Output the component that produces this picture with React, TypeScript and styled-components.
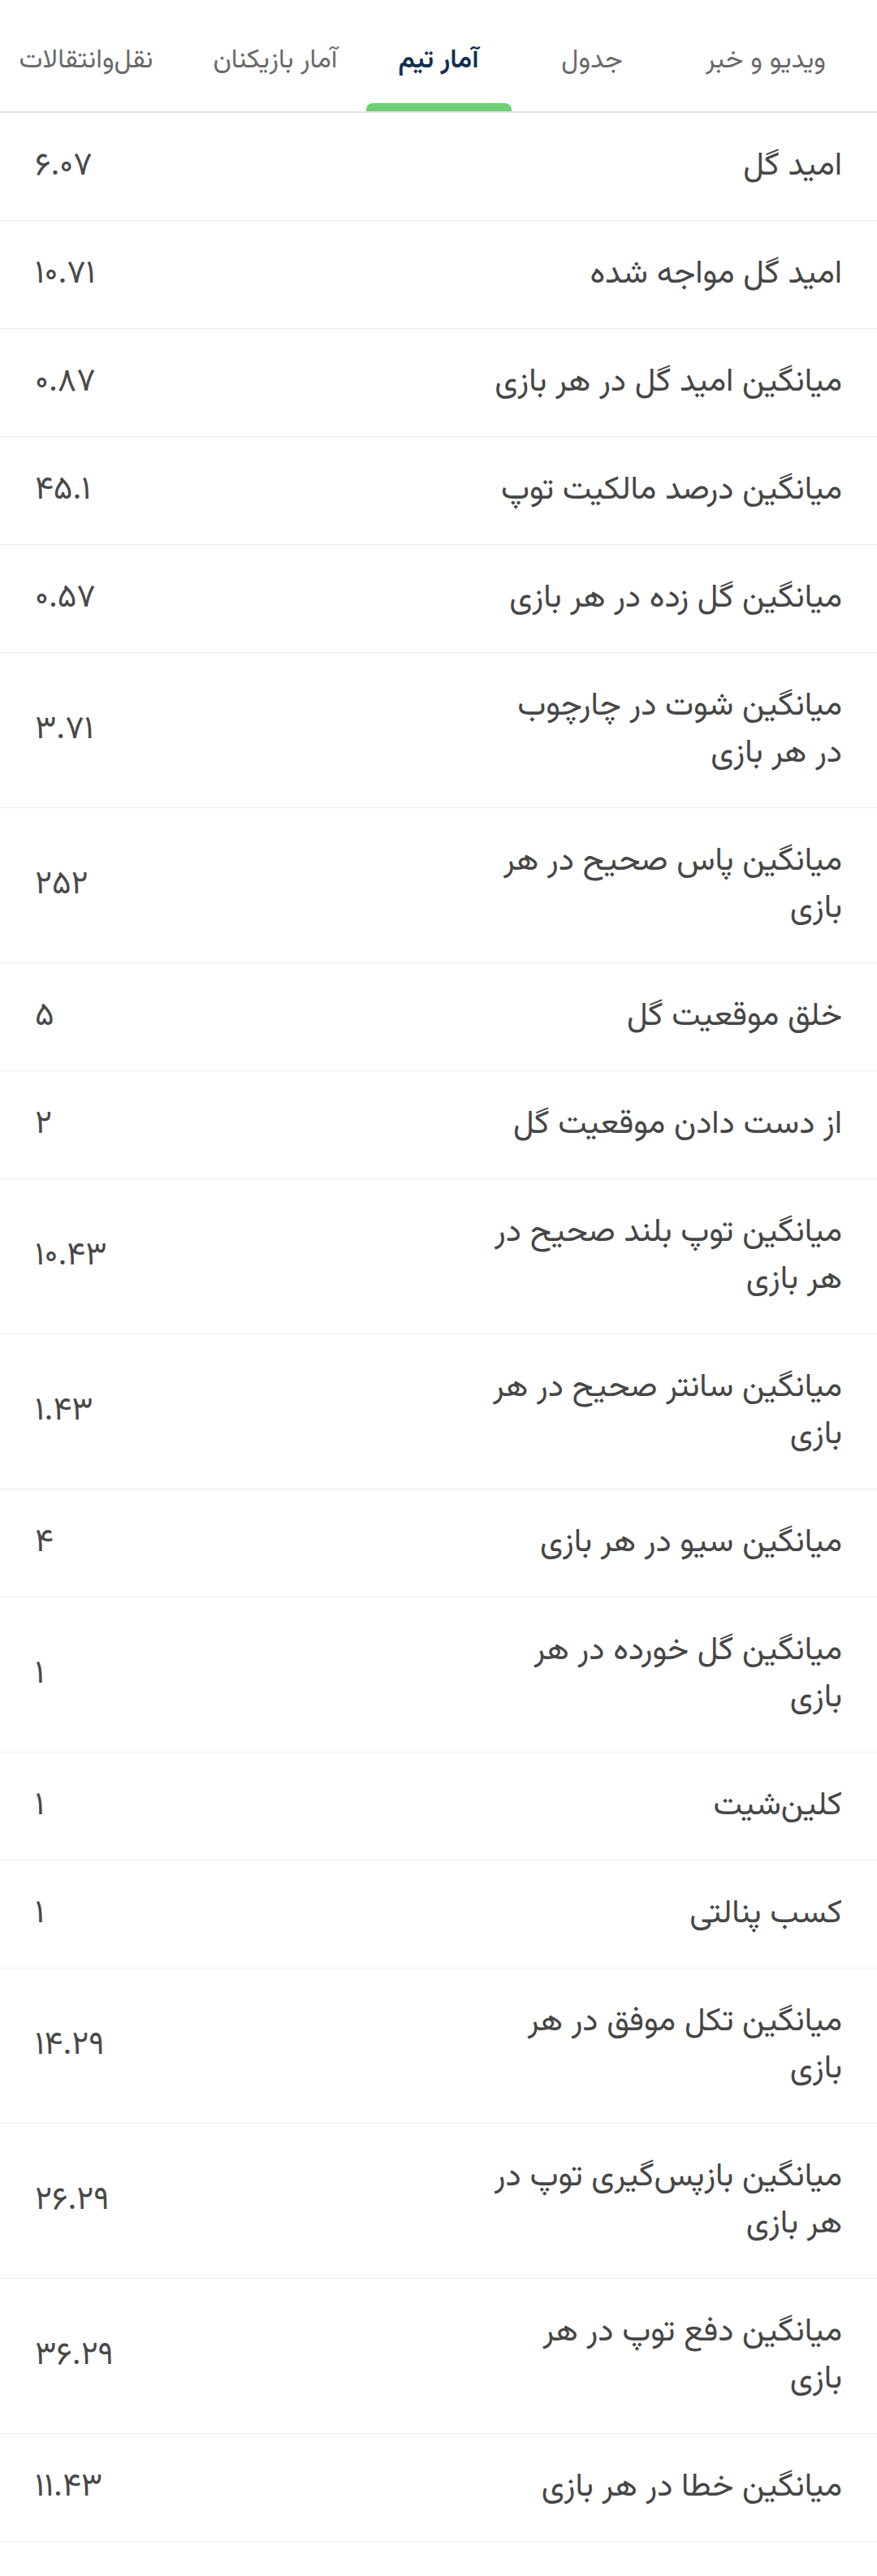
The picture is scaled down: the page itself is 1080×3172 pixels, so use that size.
import React from "react";
import styled, { createGlobalStyle } from "styled-components";

const GlobalStyle = createGlobalStyle`
  html, body {
    margin: 0;
    padding: 0;
    background: #ffffff;
  }
  body {
    font-family: "Vazirmatn", "Noto Sans Arabic", "DejaVu Sans", sans-serif;
    -webkit-font-smoothing: antialiased;
  }
`;

const Page = styled.div`
  width: 1080px;
  background: #ffffff;
  direction: rtl;
  overflow: hidden;
`;

const TabBar = styled.nav`
  display: flex;
  flex-direction: row;
  height: 137px;
  padding-right: 34px;
  border-bottom: 2px solid #e3e3e3;
  overflow: hidden;
`;

const Tab = styled.div<{ $w: number; $active?: boolean }>`
  position: relative;
  flex: 0 0 ${(p) => p.$w}px;
  display: flex;
  align-items: center;
  justify-content: center;
  padding-top: 12px;
  box-sizing: border-box;
  font-size: 33px;
  white-space: nowrap;
  color: ${(p) => (p.$active ? "#12304f" : "#6a6a6a")};
  font-weight: ${(p) => (p.$active ? 600 : 400)};
`;

const Indicator = styled.span`
  position: absolute;
  bottom: -1px;
  left: 50%;
  width: 179px;
  height: 11px;
  margin-left: -89.5px;
  background: #6dcf74;
  border-radius: 8px 8px 0 0;
`;

const List = styled.div`
  display: flex;
  flex-direction: column;
`;

const Row = styled.div`
  display: flex;
  flex-direction: row;
  justify-content: space-between;
  align-items: center;
  padding: 37px 43px;
  border-bottom: 1px solid #ececec;
`;

const Label = styled.div`
  font-size: 40px;
  line-height: 58px;
  color: #464646;
  text-align: right;
`;

const Line = styled.span`
  display: block;
  white-space: nowrap;
`;

const Value = styled.div`
  direction: ltr;
  font-size: 40px;
  line-height: 58px;
  color: #484848;
  white-space: nowrap;
`;

const tabs = [
  { title: "ویدیو و خبر", w: 206 },
  { title: "جدول", w: 222 },
  { title: "آمار تیم", w: 156, active: true },
  { title: "آمار بازیکنان", w: 246 },
  { title: "نقل‌وانتقالات", w: 220 },
];

const stats: { label: string[]; value: string }[] = [
  { label: ["امید گل"], value: "۶.۰۷" },
  { label: ["امید گل مواجه شده"], value: "۱۰.۷۱" },
  { label: ["میانگین امید گل در هر بازی"], value: "۰.۸۷" },
  { label: ["میانگین درصد مالکیت توپ"], value: "۴۵.۱" },
  { label: ["میانگین گل زده در هر بازی"], value: "۰.۵۷" },
  { label: ["میانگین شوت در چارچوب", "در هر بازی"], value: "۳.۷۱" },
  { label: ["میانگین پاس صحیح در هر", "بازی"], value: "۲۵۲" },
  { label: ["خلق موقعیت گل"], value: "۵" },
  { label: ["از دست دادن موقعیت گل"], value: "۲" },
  { label: ["میانگین توپ بلند صحیح در", "هر بازی"], value: "۱۰.۴۳" },
  { label: ["میانگین سانتر صحیح در هر", "بازی"], value: "۱.۴۳" },
  { label: ["میانگین سیو در هر بازی"], value: "۴" },
  { label: ["میانگین گل خورده در هر", "بازی"], value: "۱" },
  { label: ["کلین‌شیت"], value: "۱" },
  { label: ["کسب پنالتی"], value: "۱" },
  { label: ["میانگین تکل موفق در هر", "بازی"], value: "۱۴.۲۹" },
  { label: ["میانگین بازپس‌گیری توپ در", "هر بازی"], value: "۲۶.۲۹" },
  { label: ["میانگین دفع توپ در هر", "بازی"], value: "۳۶.۲۹" },
  { label: ["میانگین خطا در هر بازی"], value: "۱۱.۴۳" },
];

export default function App() {
  return (
    <>
      <GlobalStyle />
      <Page>
        <TabBar>
          {tabs.map((t) => (
            <Tab key={t.title} $w={t.w} $active={t.active}>
              {t.title}
              {t.active && <Indicator />}
            </Tab>
          ))}
        </TabBar>
        <List>
          {stats.map((s, i) => (
            <Row key={i}>
              <Label>
                {s.label.map((l, j) => (
                  <Line key={j}>{l}</Line>
                ))}
              </Label>
              <Value>{s.value}</Value>
            </Row>
          ))}
        </List>
      </Page>
    </>
  );
}
